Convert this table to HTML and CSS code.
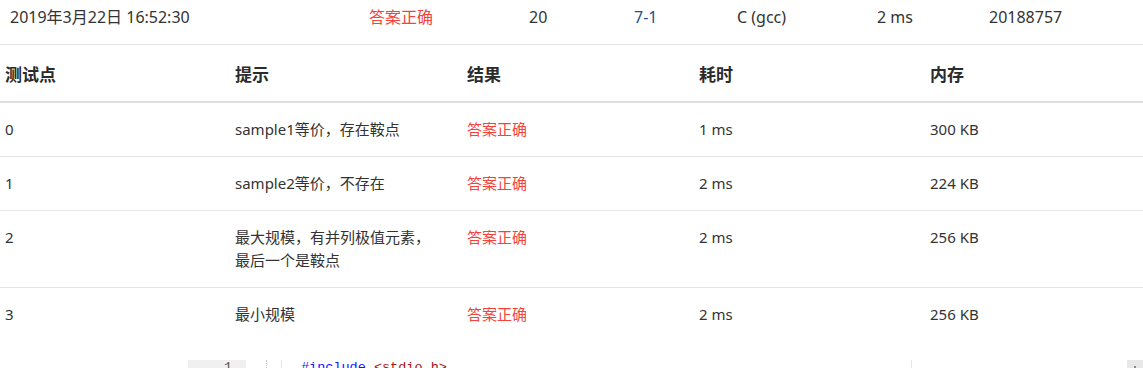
FILE: index.html
```html
<!DOCTYPE html>
<html lang="zh-CN">
<head>
<meta charset="utf-8">
<title>提交详情</title>
<link rel="stylesheet" href="styles.css">
</head>
<body>
<div class="page">
  <div class="summary">
    <span class="s-time">2019年3月22日 16:52:30</span>
    <span class="s-status ok">答案正确</span>
    <span class="s-score">20</span>
    <span class="s-problem"><a class="link">7-1</a></span>
    <span class="s-lang">C (gcc)</span>
    <span class="s-cost">2 ms</span>
    <span class="s-user">20188757</span>
  </div>

  <div class="cases">
    <div class="row head">
      <div class="cell">测试点</div>
      <div class="cell">提示</div>
      <div class="cell">结果</div>
      <div class="cell">耗时</div>
      <div class="cell">内存</div>
    </div>
    <div class="row">
      <div class="cell">0</div>
      <div class="cell"><div class="hint">sample1等价，存在鞍点</div></div>
      <div class="cell ok">答案正确</div>
      <div class="cell">1 ms</div>
      <div class="cell">300 KB</div>
    </div>
    <div class="row">
      <div class="cell">1</div>
      <div class="cell"><div class="hint">sample2等价，不存在</div></div>
      <div class="cell ok">答案正确</div>
      <div class="cell">2 ms</div>
      <div class="cell">224 KB</div>
    </div>
    <div class="row">
      <div class="cell">2</div>
      <div class="cell"><div class="hint">最大规模，有并列极值元素，最后一个是鞍点</div></div>
      <div class="cell ok">答案正确</div>
      <div class="cell">2 ms</div>
      <div class="cell">256 KB</div>
    </div>
    <div class="row last">
      <div class="cell">3</div>
      <div class="cell"><div class="hint">最小规模</div></div>
      <div class="cell ok">答案正确</div>
      <div class="cell">2 ms</div>
      <div class="cell">256 KB</div>
    </div>
  </div>

  <div class="code">
    <div class="gutter"><span class="ln">1</span></div>
    <div class="fold"></div>
    <div class="editor">
      <div class="line"><span class="kw">#include</span> <span class="str">&lt;stdio.h&gt;</span></div>
      <div class="margin-line"></div>
    </div>
    <div class="scrollbar"><span class="arrow"></span></div>
  </div>
</div>
</body>
</html>
```

FILE: styles.css
```css
* { box-sizing: border-box; }

html, body {
  margin: 0;
  padding: 0;
  background: #fff;
}

body {
  width: 1143px;
  height: 368px;
  overflow: hidden;
  font-family: "Noto Sans", "Noto Sans CJK SC", sans-serif;
  color: #333;
}

.page {
  width: 1143px;
}

.ok { color: #f5433a; }

.link { color: #1d4f91; text-decoration: none; }

/* top summary row */
.summary {
  display: flex;
  align-items: center;
  height: 45px;
  padding: 0 0 10px 10px;
  border-bottom: 1px solid #e3e5ec;
  font-size: 16px;
  line-height: 24px;
  white-space: nowrap;
}
.s-time { width: 359px; }
.s-status { width: 160px; }
.s-score { width: 105px; }
.s-problem { width: 103px; }
.s-lang { width: 140px; }
.s-cost { width: 112px; }
.s-user { flex: 1; }

/* test case table */
.cases {
  width: 1143px;
}
.row {
  display: grid;
  grid-template-columns: 230px 232px 232px 231px 1fr;
  border-bottom: 1px solid #e3e5ec;
  font-size: 15px;
  line-height: 23px;
}
.row.head {
  border-bottom: 2px solid #dcdfe3;
  font-size: 17px;
  font-weight: bold;
  line-height: 24px;
  color: #2b2b2b;
}
.row.head .cell {
  padding: 18px 0 14px 5px;
}
.row.last {
  border-bottom: none;
}
.cell {
  padding: 15px 0 15px 5px;
}
.hint {
  max-width: 200px;
}

/* code editor preview */
.code {
  display: flex;
  height: 30px;
  margin-top: 19px;
  padding-left: 188px;
}
.gutter {
  width: 58px;
  background: #f0f0f0;
  text-align: right;
  padding: 0 14px 0 0;
  font-family: "Liberation Mono", monospace;
  font-size: 13.5px;
  line-height: 16px;
  color: #555;
}
.fold {
  margin-left: 20px;
  border-left: 1px dotted #c8c8c8;
  border-right: 1px solid #e4e4e4;
  width: 16px;
}
.editor {
  position: relative;
  flex: 1;
  padding-left: 19px;
  font-family: "Liberation Mono", monospace;
  font-size: 13.5px;
  line-height: 16px;
}
.kw { color: #1414ff; }
.str { color: #a31515; }
.margin-line {
  position: absolute;
  top: 0;
  bottom: 0;
  left: 629px;
  border-left: 1px solid #e4e4e4;
}
.scrollbar {
  width: 16px;
  background: #e8e8e8;
  position: relative;
}
.arrow {
  position: absolute;
  left: 7px;
  top: 6px;
  width: 2px;
  height: 3px;
  background: #888;
}
```
